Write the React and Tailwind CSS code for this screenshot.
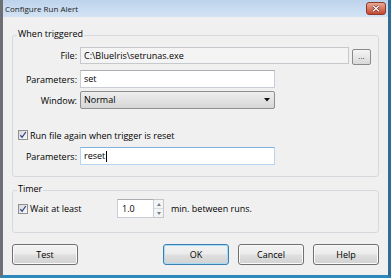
import React from "react";

const CheckBox = () => (
  <span className="flex h-[10px] w-[10px] shrink-0 items-center justify-center border border-[#8e8f8f] bg-gradient-to-br from-[#d8d8d8] to-[#fbfbfb]">
    <svg width="8" height="8" viewBox="0 0 8 8">
      <path d="M1.3 4.3 L3.1 6.3 L6.8 1" fill="none" stroke="#33448f" strokeWidth="1.3" />
    </svg>
  </span>
);

const Btn = ({ children, primary, className = "" }) => (
  <button
    className={`h-[21px] w-[66px] rounded-[3px] border text-[9px] leading-none text-black bg-[linear-gradient(to_bottom,#f3f3f3_0%,#ececec_45%,#dedede_55%,#d2d2d2_100%)] ${
      primary
        ? "border-[#3c7fb1] shadow-[inset_0_0_0_1px_#a8dcf5]"
        : "border-[#707070] shadow-[inset_0_0_0_1px_#fafafa]"
    } ${className}`}
  >
    {children}
  </button>
);

const Label = ({ children }) => (
  <span className="w-[64px] shrink-0 text-right leading-none">{children}</span>
);

const GroupBox = ({ title, className = "", children }) => (
  <div className={`relative ml-[9px] w-[367px] rounded-[3px] border border-[#d5d9dd] ${className}`}>
    <span className="absolute left-[4px] top-[-8px] bg-[#f0f0f0] px-[1px] leading-[12px]">{title}</span>
    {children}
  </div>
);

export default function App() {
  return (
    <div className="flex h-[278px] w-[391px] flex-col border-l-[3px] border-r-[3px] border-b-[3px] border-l-[#6c6f74] border-r-[#2c6e98] border-b-[#2a88ba] bg-[#f0f0f0] font-['Open_Sans',sans-serif] text-[9px] text-black">
      {/* Title bar */}
      <div className="flex h-[17px] shrink-0 items-center justify-between bg-gradient-to-b from-[#bdd3ec] to-[#d3e3f4] pl-[2px] pr-[2px]">
        <span className="text-[8px] leading-none text-[#1a1a1a]">Configure Run Alert</span>
        <span className="mt-[-1px] flex h-[13px] w-[20px] items-center justify-center rounded-[3px] border border-[#8b3b2c] bg-gradient-to-b from-[#e9a895] to-[#c5452d]">
          <svg width="8" height="7" viewBox="0 0 8 7">
            <path d="M1 0.8 L7 6.2 M7 0.8 L1 6.2" stroke="#5a1d12" strokeWidth="2.4" />
            <path d="M1 0.8 L7 6.2 M7 0.8 L1 6.2" stroke="#ffffff" strokeWidth="1.4" />
          </svg>
        </span>
      </div>

      {/* When triggered */}
      <GroupBox title="When triggered" className="mt-[18px] pb-[11px]">
        <div className="mt-[10px] flex items-center">
          <Label>File:</Label>
          <div className="ml-[3px] flex h-[17px] w-[269px] items-center border border-[#c5c8cc] bg-[#f4f4f4] pl-[3px]">
            C:\BlueIris\setrunas.exe
          </div>
          <button className="ml-[3px] mt-[3px] flex h-[16px] w-[19px] items-center justify-center rounded-[2px] border border-[#8a8a8a] bg-gradient-to-b from-[#f4f4f4] to-[#d9d9d9] pb-[3px] text-[8px] leading-none text-[#333]">
            ...
          </button>
        </div>

        <div className="mt-[5px] flex items-center">
          <Label>Parameters:</Label>
          <div className="ml-[3px] flex h-[18px] w-[195px] items-center border border-[#c9ced6] border-t-[#abadb3] bg-white pl-[3px]">
            set
          </div>
        </div>

        <div className="mt-[3px] flex items-center">
          <Label>Window:</Label>
          <div className="ml-[3px] flex h-[18px] w-[195px] items-center justify-between rounded-[2px] border border-[#8e8f8f] bg-gradient-to-b from-[#eeeeee] to-[#d6d6d6] pl-[3px] pr-[4px]">
            <span>Normal</span>
            <svg width="6" height="4" viewBox="0 0 6 4">
              <path d="M0 0 H6 L3 3.5 Z" fill="#111" />
            </svg>
          </div>
        </div>

        <div className="ml-[5px] mt-[20px] flex h-[12px] items-center">
          <CheckBox />
          <span className="ml-[2px] leading-none">Run file again when trigger is reset</span>
        </div>

        <div className="mt-[6px] flex items-center">
          <Label>Parameters:</Label>
          <div className="ml-[3px] flex h-[18px] w-[195px] items-center border border-[#b7d4ef] border-t-[#7fb0e0] bg-white pl-[3px]">
            reset
            <span className="ml-[1px] h-[11px] w-[1px] bg-black" />
          </div>
        </div>
      </GroupBox>

      {/* Timer */}
      <GroupBox title="Timer" className="mt-[13px] pb-[14px]">
        <div className="mt-[8px] flex h-[19px] items-center">
          <div className="ml-[5px] flex w-[99px] items-center">
            <CheckBox />
            <span className="ml-[2px] leading-none">Wait at least</span>
          </div>
          <div className="flex h-[19px] w-[37px] items-center border border-[#c9ced6] border-t-[#abadb3] bg-white pl-[4px]">
            1.0
          </div>
          <div className="flex h-[19px] w-[10px] flex-col border border-l-0 border-[#c6c6c6] bg-[#f4f4f4]">
            <span className="flex flex-1 items-center justify-center border-b border-[#dcdcdc]">
              <svg width="4" height="3" viewBox="0 0 4 3">
                <path d="M0 3 H4 L2 0 Z" fill="#6d7f95" />
              </svg>
            </span>
            <span className="flex flex-1 items-center justify-center">
              <svg width="4" height="3" viewBox="0 0 4 3">
                <path d="M0 0 H4 L2 3 Z" fill="#6d7f95" />
              </svg>
            </span>
          </div>
          <span className="ml-[7px] leading-none">min. between runs.</span>
        </div>
      </GroupBox>

      {/* Buttons */}
      <div className="ml-[9px] mt-[11px] flex w-[367px] items-center">
        <Btn className="w-[65px]">Test</Btn>
        <div className="flex-1" />
        <div className="flex items-center gap-[9px]">
          <Btn primary>OK</Btn>
          <Btn>Cancel</Btn>
          <Btn>Help</Btn>
        </div>
      </div>
    </div>
  );
}
